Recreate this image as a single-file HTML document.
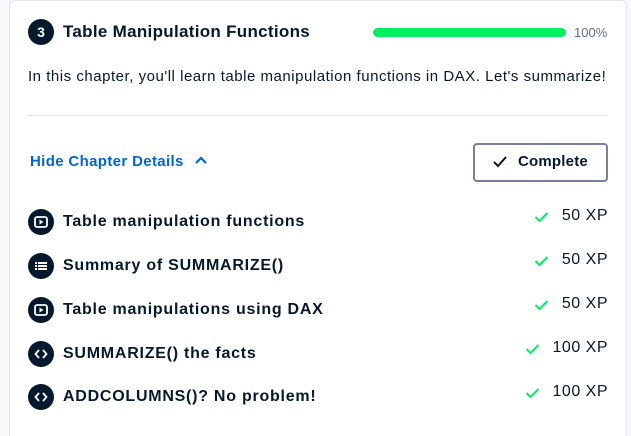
<!DOCTYPE html>
<html><head><style>
*{margin:0;padding:0;box-sizing:border-box}
html,body{width:631px;height:436px;overflow:hidden}
body{background:#f7f7fc;font-family:"Liberation Sans",sans-serif;color:#05192d;position:relative}
.card{position:absolute;left:9px;top:0;width:618px;height:436px;background:#fff;border:1px solid #e5e5ec;border-bottom:none;border-radius:6px 6px 0 0}
.abs{position:absolute;white-space:nowrap}
.circ{position:absolute;left:28px;width:26px;height:26px;border-radius:50%;background:#05192d;display:flex;align-items:center;justify-content:center}
.row{position:absolute;left:63px;font-size:16px;font-weight:bold;letter-spacing:0.75px;white-space:nowrap}
.xp{position:absolute;right:23px;font-size:16px;color:#05192d;letter-spacing:0.5px}
.chk{position:absolute}
</style></head><body>
<div class="card"></div>
<div class="circ" style="top:19px;color:#fff;font-weight:bold;font-size:14px">3</div>
<div class="abs" style="left:63px;top:22px;font-size:17px;font-weight:bold;letter-spacing:0.3px">Table Manipulation Functions</div>
<div class="abs" style="left:373px;top:28px;width:193px;height:9px;border-radius:5px;background:#03ef62"></div>
<div class="abs" style="left:574px;top:25px;font-size:13px;color:#626d7c">100%</div>
<div class="abs" style="left:28px;top:68px;font-size:15px;letter-spacing:0.52px">In this chapter, you'll learn table manipulation functions in DAX. Let's summarize!</div>
<div class="abs" style="left:28px;top:115px;width:580px;height:1px;background:#e1e1e6"></div>
<div class="abs" style="left:30px;top:153px;font-size:15px;color:#0065d1;font-weight:bold;letter-spacing:0.35px">Hide Chapter Details</div>
<svg class="abs" style="left:194px;top:155px" width="14" height="10" viewBox="0 0 14 10"><path d="M2 8 L7 3 L12 8" fill="none" stroke="#0065d1" stroke-width="2.2"/></svg>
<div class="abs" style="left:473px;top:143px;width:135px;height:39px;border:2px solid #7b809f;border-radius:4px"></div>
<svg class="abs" style="left:492px;top:155px" width="16" height="14" viewBox="0 0 16 14"><path d="M2 7 L6 11 L14 2" fill="none" stroke="#05192d" stroke-width="2"/></svg>
<div class="abs" style="left:518px;top:153px;font-size:15px;font-weight:bold;letter-spacing:0.2px">Complete</div>

<div class="circ" style="top:209px"><svg width="14" height="12" viewBox="0 0 14 12"><rect x="1" y="1" width="12" height="10" rx="2" fill="none" stroke="#fff" stroke-width="1.8"/><path d="M5.5 3.5 L9.5 6 L5.5 8.5Z" fill="#fff"/></svg></div>
<div class="row" style="top:213px">Table manipulation functions</div>
<div class="circ" style="top:253px"><svg width="14" height="12" viewBox="0 0 14 12"><rect x="1" y="2" width="2" height="2" fill="#fff"/><rect x="4" y="2" width="9" height="2" fill="#fff"/><rect x="1" y="5" width="2" height="2" fill="#fff"/><rect x="4" y="5" width="9" height="2" fill="#fff"/><rect x="1" y="8" width="2" height="2" fill="#fff"/><rect x="4" y="8" width="9" height="2" fill="#fff"/></svg></div>
<div class="row" style="top:257px">Summary of SUMMARIZE()</div>
<div class="circ" style="top:297px"><svg width="14" height="12" viewBox="0 0 14 12"><rect x="1" y="1" width="12" height="10" rx="2" fill="none" stroke="#fff" stroke-width="1.8"/><path d="M5.5 3.5 L9.5 6 L5.5 8.5Z" fill="#fff"/></svg></div>
<div class="row" style="top:301px">Table manipulations using DAX</div>
<div class="circ" style="top:341px"><svg width="14" height="12" viewBox="0 0 14 12"><path d="M5 2 L1.5 6 L5 10 M9 2 L12.5 6 L9 10" fill="none" stroke="#fff" stroke-width="1.8"/></svg></div>
<div class="row" style="top:345px">SUMMARIZE() the facts</div>
<div class="circ" style="top:384px"><svg width="14" height="12" viewBox="0 0 14 12"><path d="M5 2 L1.5 6 L5 10 M9 2 L12.5 6 L9 10" fill="none" stroke="#fff" stroke-width="1.8"/></svg></div>
<div class="row" style="top:388px">ADDCOLUMNS()? No problem!</div>

<svg class="chk" style="left:534px;top:211px" width="15" height="12" viewBox="0 0 15 12"><path d="M1.5 6 L5.5 10 L13.5 2" fill="none" stroke="#03ef62" stroke-width="2"/></svg>
<div class="xp" style="top:207px">50 XP</div>
<svg class="chk" style="left:534px;top:255px" width="15" height="12" viewBox="0 0 15 12"><path d="M1.5 6 L5.5 10 L13.5 2" fill="none" stroke="#03ef62" stroke-width="2"/></svg>
<div class="xp" style="top:251px">50 XP</div>
<svg class="chk" style="left:534px;top:299px" width="15" height="12" viewBox="0 0 15 12"><path d="M1.5 6 L5.5 10 L13.5 2" fill="none" stroke="#03ef62" stroke-width="2"/></svg>
<div class="xp" style="top:295px">50 XP</div>
<svg class="chk" style="left:525px;top:343px" width="15" height="12" viewBox="0 0 15 12"><path d="M1.5 6 L5.5 10 L13.5 2" fill="none" stroke="#03ef62" stroke-width="2"/></svg>
<div class="xp" style="top:339px">100 XP</div>
<svg class="chk" style="left:525px;top:387px" width="15" height="12" viewBox="0 0 15 12"><path d="M1.5 6 L5.5 10 L13.5 2" fill="none" stroke="#03ef62" stroke-width="2"/></svg>
<div class="xp" style="top:383px">100 XP</div>
</body></html>
